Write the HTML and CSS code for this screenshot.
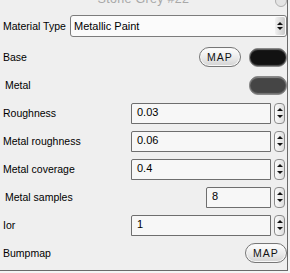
FILE: index.html
```html
<!DOCTYPE html>
<html lang="en">
<head>
  <meta charset="UTF-8">
  <title>Stone Grey #22</title>
  <link rel="stylesheet" href="styles.css">
</head>
<body>

  <div class="panel">
    <div class="title-bar">
      <span class="title">Stone Grey #22</span>
      <span class="close-dot"></span>
    </div>

    <div class="row row-type">
      <span class="label">Material Type</span>
      <div class="select">
        <span class="select-text">Metallic Paint</span>
        <span class="select-arrows">
          <span class="tri up"></span>
          <span class="tri down"></span>
        </span>
      </div>
    </div>

    <div class="row">
      <span class="label">Base</span>
      <button class="map-btn">MAP</button>
      <span class="swatch swatch-base"></span>
    </div>

    <div class="row">
      <span class="label indent">Metal</span>
      <span class="swatch swatch-metal"></span>
    </div>

    <div class="row">
      <span class="label">Roughness</span>
      <div class="field wide">0.03</div>
      <span class="spin"><span class="tri up"></span><span class="tri down"></span></span>
    </div>

    <div class="row">
      <span class="label">Metal roughness</span>
      <div class="field wide">0.06</div>
      <span class="spin"><span class="tri up"></span><span class="tri down"></span></span>
    </div>

    <div class="row">
      <span class="label">Metal coverage</span>
      <div class="field wide">0.4</div>
      <span class="spin"><span class="tri up"></span><span class="tri down"></span></span>
    </div>

    <div class="row">
      <span class="label indent">Metal samples</span>
      <div class="field narrow">8</div>
      <span class="spin"><span class="tri up"></span><span class="tri down"></span></span>
    </div>

    <div class="row">
      <span class="label">Ior</span>
      <div class="field wide">1</div>
      <span class="spin"><span class="tri up"></span><span class="tri down"></span></span>
    </div>

    <div class="row">
      <span class="label">Bumpmap</span>
      <button class="map-btn map-end">MAP</button>
    </div>
  </div>

</body>
</html>
```

FILE: styles.css
```css
body {
  margin: 0;
  background: #f4f4f4;
  font-family: "Liberation Sans", Arial, sans-serif;
  font-size: 10.5px;
  color: #000;
}
.panel {
  width: 287px;
  height: 270px;
  background: #efefef;
  border-right: 1px solid #6a6a6a;
  border-bottom: 1px solid #6a6a6a;
  display: flex;
  flex-direction: column;
  overflow: hidden;
}
.title-bar {
  height: 13px;
  display: flex;
  align-items: flex-end;
  justify-content: center;
  overflow: hidden;
  position: relative;
}
.title {
  font-size: 12.5px;
  line-height: 20px;
  color: #a8a8a8;
  margin-bottom: 4px;
  letter-spacing: 0.3px;
}
.close-dot {
  position: absolute;
  right: 0;
  top: -5px;
  width: 10px;
  height: 10px;
  border: 1px solid #b0b0b0;
  border-radius: 50%;
  background: #e4e4e4;
}
.row {
  height: 28px;
  display: flex;
  align-items: center;
  padding-left: 3px;
}
.row-type {
  height: 25px;
  margin-bottom: 5px;
}
.label {
  flex: 1;
  white-space: nowrap;
}
.indent {
  padding-left: 2px;
}
.select {
  width: 217px;
  height: 22px;
  box-sizing: border-box;
  border: 1px solid #7c7c7c;
  border-radius: 3px;
  background: #fbfbfb;
  display: flex;
  align-items: center;
  font-size: 11px;
}
.select-text {
  flex: 1;
  padding-left: 3px;
}
.select-arrows {
  width: 10px;
  height: 18px;
  margin-right: 1px;
  border-radius: 2px;
  background: linear-gradient(to right, #f2f2f2, #c9c9c9);
  display: flex;
  flex-direction: column;
  align-items: center;
  justify-content: center;
  gap: 2px;
}
.tri {
  width: 0;
  height: 0;
  border-left: 3px solid transparent;
  border-right: 3px solid transparent;
}
.tri.up {
  border-bottom: 3px solid #111;
}
.tri.down {
  border-top: 3px solid #111;
}
.map-btn {
  width: 42px;
  height: 20px;
  padding: 0;
  border: 1px solid #777;
  border-radius: 10px;
  background: linear-gradient(to bottom, #ffffff, #e8e8e8 60%, #d2d2d2);
  box-shadow: inset 0 0 0 1px #f8f8f8;
  font-family: "Liberation Sans", Arial, sans-serif;
  font-size: 10.5px;
  letter-spacing: 1px;
  color: #111;
  margin-right: 8px;
}
.map-end {
  margin-right: 0;
}
.swatch {
  width: 38px;
  height: 19px;
  border-radius: 9px;
  border: 1px solid #8a8a8a;
  box-sizing: border-box;
}
.swatch-base {
  background: #121212;
  box-shadow: inset 0 1px 1px #666, inset 0 -1px 1px #555;
}
.swatch-metal {
  background: #454545;
  box-shadow: inset 0 1px 1px #888, inset 0 -1px 1px #777;
}
.field {
  height: 21px;
  box-sizing: border-box;
  border: 1px solid #6e6e6e;
  border-radius: 2px 0 0 0;
  background: #f7f7f7;
  padding-left: 5px;
  line-height: 16px;
  font-size: 11px;
}
.wide {
  width: 140px;
}
.narrow {
  width: 65px;
}
.spin {
  width: 11px;
  height: 21px;
  box-sizing: border-box;
  margin-left: 3px;
  margin-right: 2px;
  border: 1px solid #8c8c8c;
  border-radius: 4px;
  background: linear-gradient(to right, #fbfbfb, #dedede);
  display: flex;
  flex-direction: column;
  align-items: center;
  justify-content: center;
  gap: 4px;
}
```
